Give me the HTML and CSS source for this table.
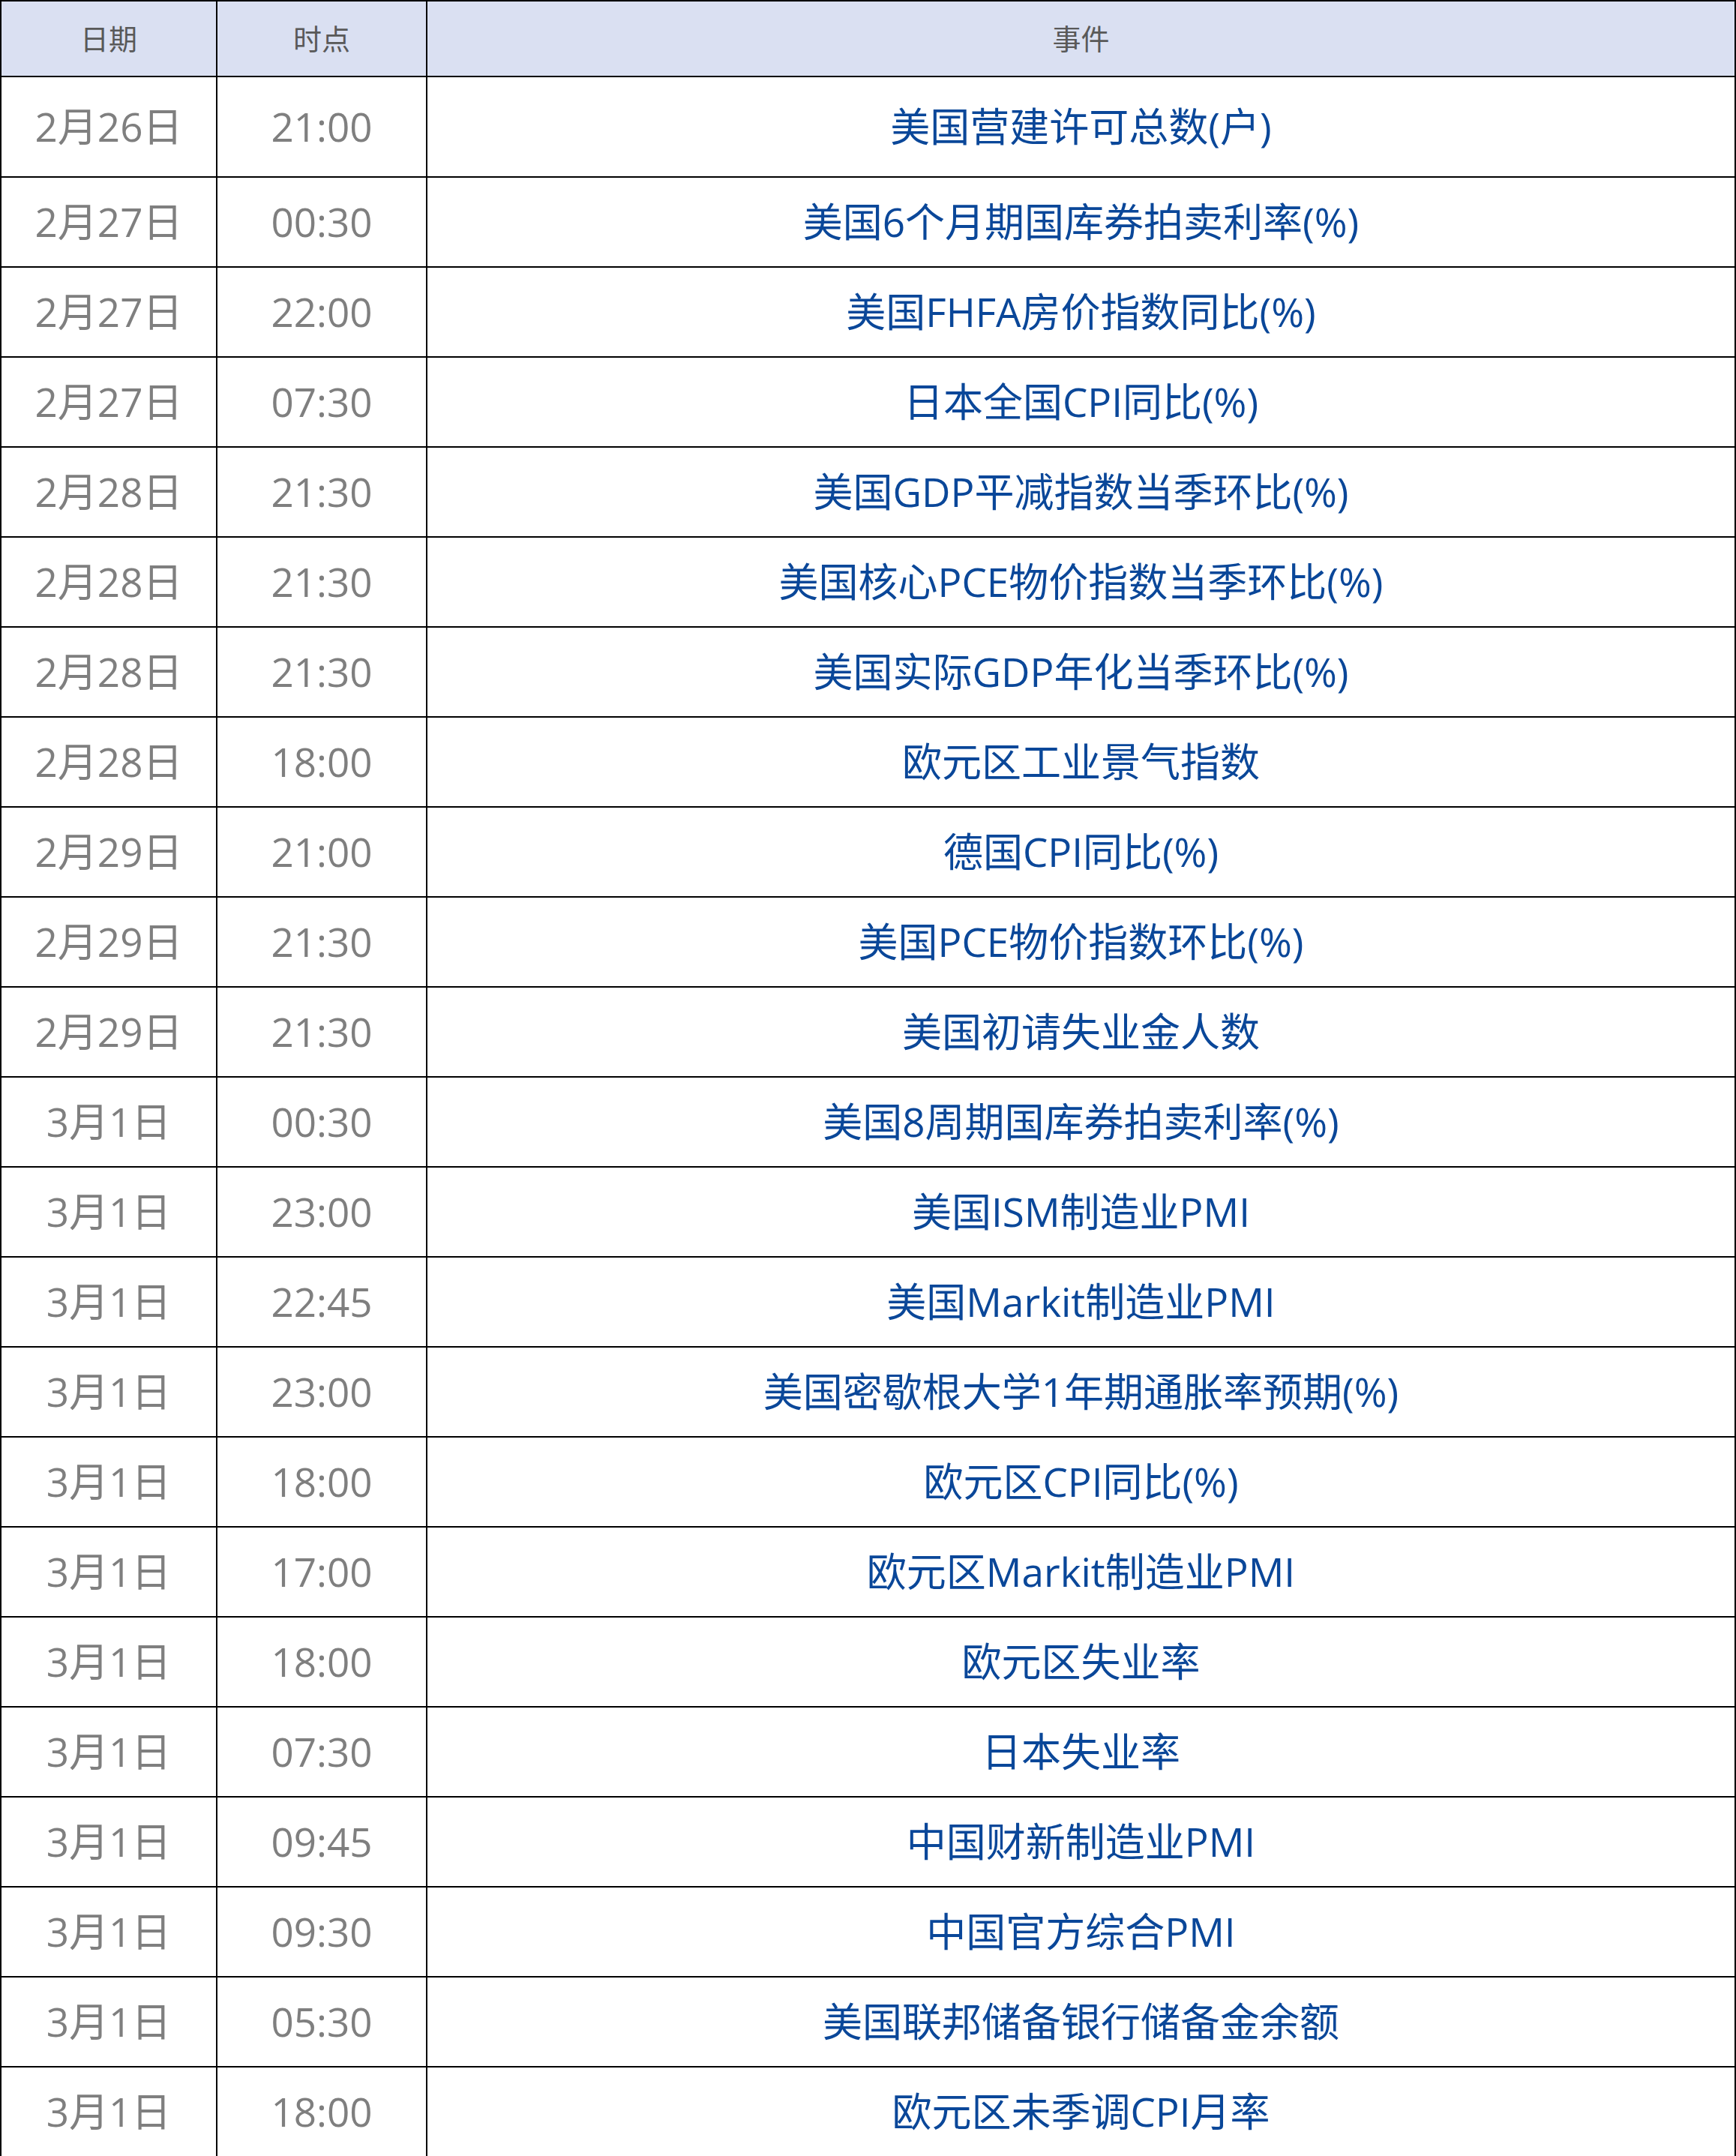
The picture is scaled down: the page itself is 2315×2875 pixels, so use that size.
FILE: index.html
```html
<!DOCTYPE html>
<html lang="zh-CN">
<head>
<meta charset="utf-8">
<title>财经日历</title>
<link rel="stylesheet" href="styles.css">
</head>
<body>
<table class="cal">
  <colgroup>
    <col class="c-date">
    <col class="c-time">
    <col class="c-event">
  </colgroup>
  <thead>
    <tr class="head"><th>日期</th><th>时点</th><th>事件</th></tr>
  </thead>
  <tbody>
    <tr class="first"><td class="d">2月26日</td><td class="t">21:00</td><td class="e">美国营建许可总数(户)</td></tr>
    <tr><td class="d">2月27日</td><td class="t">00:30</td><td class="e">美国6个月期国库券拍卖利率(%)</td></tr>
    <tr><td class="d">2月27日</td><td class="t">22:00</td><td class="e">美国FHFA房价指数同比(%)</td></tr>
    <tr><td class="d">2月27日</td><td class="t">07:30</td><td class="e">日本全国CPI同比(%)</td></tr>
    <tr><td class="d">2月28日</td><td class="t">21:30</td><td class="e">美国GDP平减指数当季环比(%)</td></tr>
    <tr><td class="d">2月28日</td><td class="t">21:30</td><td class="e">美国核心PCE物价指数当季环比(%)</td></tr>
    <tr><td class="d">2月28日</td><td class="t">21:30</td><td class="e">美国实际GDP年化当季环比(%)</td></tr>
    <tr><td class="d">2月28日</td><td class="t">18:00</td><td class="e">欧元区工业景气指数</td></tr>
    <tr><td class="d">2月29日</td><td class="t">21:00</td><td class="e">德国CPI同比(%)</td></tr>
    <tr><td class="d">2月29日</td><td class="t">21:30</td><td class="e">美国PCE物价指数环比(%)</td></tr>
    <tr><td class="d">2月29日</td><td class="t">21:30</td><td class="e">美国初请失业金人数</td></tr>
    <tr><td class="d">3月1日</td><td class="t">00:30</td><td class="e">美国8周期国库券拍卖利率(%)</td></tr>
    <tr><td class="d">3月1日</td><td class="t">23:00</td><td class="e">美国ISM制造业PMI</td></tr>
    <tr><td class="d">3月1日</td><td class="t">22:45</td><td class="e">美国Markit制造业PMI</td></tr>
    <tr><td class="d">3月1日</td><td class="t">23:00</td><td class="e">美国密歇根大学1年期通胀率预期(%)</td></tr>
    <tr><td class="d">3月1日</td><td class="t">18:00</td><td class="e">欧元区CPI同比(%)</td></tr>
    <tr><td class="d">3月1日</td><td class="t">17:00</td><td class="e">欧元区Markit制造业PMI</td></tr>
    <tr><td class="d">3月1日</td><td class="t">18:00</td><td class="e">欧元区失业率</td></tr>
    <tr><td class="d">3月1日</td><td class="t">07:30</td><td class="e">日本失业率</td></tr>
    <tr><td class="d">3月1日</td><td class="t">09:45</td><td class="e">中国财新制造业PMI</td></tr>
    <tr><td class="d">3月1日</td><td class="t">09:30</td><td class="e">中国官方综合PMI</td></tr>
    <tr><td class="d">3月1日</td><td class="t">05:30</td><td class="e">美国联邦储备银行储备金余额</td></tr>
    <tr><td class="d">3月1日</td><td class="t">18:00</td><td class="e">欧元区未季调CPI月率</td></tr>
  </tbody>
</table>
</body>
</html>
```
FILE: styles.css
```css
html, body {
  margin: 0;
  padding: 0;
  background: #ffffff;
}

body {
  font-family: "Open Sans", "Noto Sans CJK SC", sans-serif;
}

.cal {
  width: 2315px;
  border-collapse: collapse;
  table-layout: fixed;
}

.c-date { width: 288px; }
.c-time { width: 280px; }
.c-event { width: auto; }

.cal th,
.cal td {
  border: 2px solid #000000;
  padding: 0;
  text-align: center;
  vertical-align: middle;
  white-space: nowrap;
}

.head {
  height: 101px;
  background: #dae0f2;
}

.head th {
  font-size: 38px;
  font-weight: 400;
  color: #595959;
  padding-bottom: 4px;
}

.cal tbody tr {
  height: 120px;
}

.cal tbody tr.first {
  height: 134px;
}

.cal td {
  font-size: 53px;
  line-height: 1.2;
}

.cal td.d,
.cal td.t {
  color: #7f7f7f;
}

.cal td.e {
  color: #0a4799;
}
```
